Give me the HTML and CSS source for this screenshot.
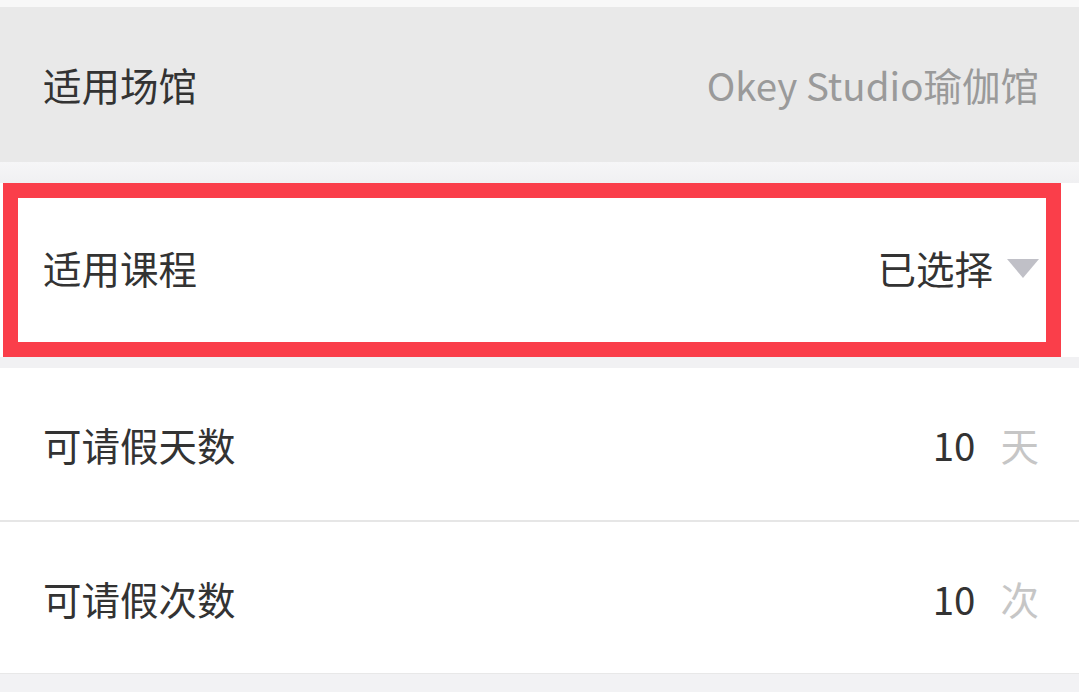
FILE: index.html
```html
<!DOCTYPE html>
<html lang="zh-CN">
<head>
<meta charset="utf-8">
<link rel="stylesheet" href="styles.css">
</head>
<body>
<div class="page">
  <div class="top-strip"></div>
  <div class="row row-disabled">
    <span class="label">适用场馆</span>
    <span class="value muted">Okey Studio瑜伽馆</span>
  </div>
  <div class="gap gap-top"></div>
  <div class="row row-course">
    <span class="label">适用课程</span>
    <span class="value select">已选择<span class="caret"></span></span>
    <div class="highlight"></div>
  </div>
  <div class="gap gap-mid"></div>
  <div class="row row-leave first">
    <span class="label">可请假天数</span>
    <span class="value"><span class="num">10</span><span class="unit">天</span></span>
  </div>
  <div class="row row-leave second">
    <span class="label">可请假次数</span>
    <span class="value"><span class="num">10</span><span class="unit">次</span></span>
  </div>
</div>
</body>
</html>
```

FILE: styles.css
```css
html, body {
  margin: 0;
  padding: 0;
}
body {
  width: 1079px;
  height: 692px;
  overflow: hidden;
  background: #f2f2f4;
  font-family: "Noto Sans CJK SC", "Noto Sans", sans-serif;
  color: #333333;
}
.page {
  display: flex;
  flex-direction: column;
}
.top-strip {
  height: 7px;
  background: #f8f8f8;
}
.row {
  position: relative;
  display: flex;
  align-items: center;
  justify-content: space-between;
  padding: 0 40px 0 43px;
  background: #ffffff;
  font-size: 38.5px;
  box-sizing: border-box;
}
.row-disabled {
  height: 155px;
  padding-bottom: 2px;
  background: #e9e9e9;
}
.gap-top {
  height: 21px;
  background: linear-gradient(#f6f6f7, #f0f0f2);
}
.gap-mid {
  height: 11px;
  background: #f1f1f3;
}
.row-course {
  height: 174px;
  padding-bottom: 6px;
}
.row-leave.first {
  height: 154px;
  border-bottom: 2px solid #e6e6e6;
}
.row-leave.second {
  height: 152px;
  border-bottom: 1px solid #e8e8e8;
}
.value {
  display: flex;
  align-items: center;
}
.muted {
  color: #9a9a9a;
}
.caret {
  width: 0;
  height: 0;
  margin-left: 14px;
  margin-top: 2px;
  border-left: 16px solid transparent;
  border-right: 16px solid transparent;
  border-top: 19px solid #c0c0c7;
}
.unit {
  color: #c6c6c6;
  margin-left: 25px;
}
.highlight {
  position: absolute;
  left: 3px;
  top: 0;
  width: 1058px;
  height: 174px;
  box-sizing: border-box;
  border: 15px solid #fa3e4a;
  pointer-events: none;
}
```
